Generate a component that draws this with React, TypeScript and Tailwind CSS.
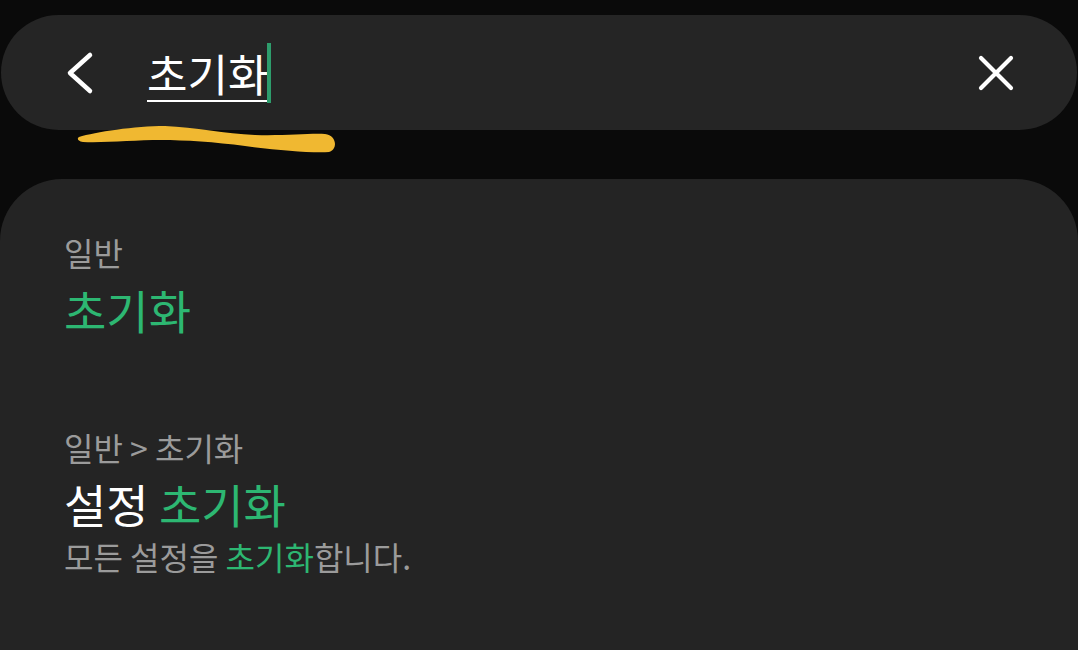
import React from 'react';

const font = { fontFamily: '"Noto Sans CJK KR", "Noto Sans", sans-serif' };

export default function App() {
    return (
        <div className="w-[1078px] h-[650px] overflow-hidden bg-[#0a0a0a] text-white pt-[15px]" style={font}>
            {/* search bar */}
            <div className="relative mx-[1px] h-[115px] rounded-full bg-[#252525] flex items-center pl-[60px] pr-[62px]">
                <svg width="36" height="48" viewBox="0 0 36 48" className="shrink-0">
                    <path d="M29 6 L9 24 L29 42" fill="none" stroke="#ffffff" strokeWidth="4.5" strokeLinecap="round" strokeLinejoin="round" />
                </svg>
                <div className="ml-[50px] flex items-center flex-1">
                    <span className="text-[44px] leading-none underline underline-offset-[8px] decoration-[2px]">초기화</span>
                    <span className="ml-[-1px] w-[4px] h-[60px] bg-[#2e9d6c]" />
                </div>
                <svg width="38" height="38" viewBox="0 0 38 38" className="shrink-0">
                    <path d="M4 4 L34 34 M34 4 L4 34" fill="none" stroke="#ffffff" strokeWidth="4.2" strokeLinecap="round" />
                </svg>
                {/* yellow marker stroke */}
                <svg className="absolute left-[74px] top-[105px]" width="266" height="36" viewBox="0 0 266 36">
                    <path
                        d="M4 17 C20 12 60 6 90 6 C120 7 150 14 180 15 C210 16 235 13 250 14 C262 15 263 30 254 32 C235 33 200 30 170 26 C140 22 110 20 86 20 C60 20 30 23 8 22 C2 21 2 18 4 17 Z"
                        fill="#f0b831"
                    />
                </svg>
            </div>

            {/* results card */}
            <div className="mt-[49px] h-[600px] rounded-tl-[62px] rounded-tr-[62px] bg-[#242424] pl-[64px] pt-[50px]">
                <div>
                    <div className="text-[32px] leading-[46px] text-[#9b9b9b]">일반</div>
                    <div className="mt-[4px] text-[46px] leading-[60px] text-[#2db772]">초기화</div>
                </div>
                <div className="mt-[85px]">
                    <div className="text-[32px] leading-[46px] text-[#9b9b9b]">일반 &gt; 초기화</div>
                    <div className="mt-[3px] text-[46px] leading-[60px]">
                        설정 <span className="text-[#2db772]">초기화</span>
                    </div>
                    <div className="text-[32px] leading-[46px] text-[#9b9b9b]">
                        모든 설정을 <span className="text-[#2db772]">초기화</span>합니다.
                    </div>
                </div>
            </div>
        </div>
    );
}
